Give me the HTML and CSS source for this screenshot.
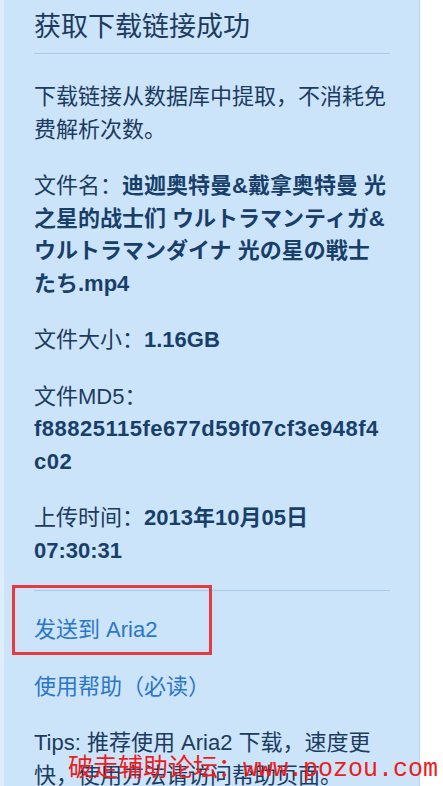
FILE: index.html
```html
<!DOCTYPE html>
<html lang="zh-CN">
<head>
    <meta charset="UTF-8">
    <meta name="viewport" content="width=device-width, initial-scale=1.0">
    <title>获取下载链接成功</title>
    <link rel="stylesheet" href="styles.css">
</head>
<body>
    <div class="panel">
        <h1 class="titulo">获取下载链接成功</h1>

        <p>下载链接从数据库中提取，不消耗免费解析次数。</p>

        <p>文件名：<b>迪迦奥特曼&amp;戴拿奥特曼 光之星的战士们 ウルトラマンティガ&amp;ウルトラマンダイナ 光の星の戦士たち.mp4</b></p>

        <p>文件大小：<b>1.16GB</b></p>

        <p>文件MD5：<br><b class="md5">f88825115fe677d59f07cf3e948f4c02</b></p>

        <p>上传时间：<b>2013年10月05日 07:30:31</b></p>

        <hr class="linea">

        <p class="marcado"><a href="#">发送到 Aria2</a><span class="caja"></span></p>

        <p><a href="#">使用帮助（必读）</a></p>

        <p>Tips: 推荐使用 Aria2 下载，速度更快，使用方法请访问帮助页面。</p>
    </div>

    <div class="marca">破走辅助论坛：www.pozou.com</div>
</body>
</html>
```

FILE: styles.css
```css
body {
    margin: 0;
    background: #fff;
    font-family: "Liberation Sans", "Noto Sans CJK SC", sans-serif;
    color: #1b3b5f;
}

.panel {
    margin-left: 4px;
    width: 356px;
    padding: 9px 29px 40px 30px;
    background: #cce4fa;
    border-right: 1px solid #b4d3ef;
    box-shadow: -4px 0 0 #ddedfb;
}

.titulo {
    margin: 0;
    padding-bottom: 8px;
    border-bottom: 1px solid #a9cbea;
    font-size: 27px;
    line-height: 36px;
    font-weight: normal;
    color: #1d3c5d;
}

.panel p {
    margin: 0;
    margin-top: 24px;
    font-size: 22px;
    line-height: 32.5px;
}

.panel p:first-of-type {
    margin-top: 27px;
}

.panel b {
    color: #173f6a;
}

.md5 {
    word-break: break-all;
    letter-spacing: 0.5px;
}

.linea {
    margin: 23px 0 0;
    border: 0;
    border-top: 1px solid #a9cbea;
}

.panel .marcado {
    margin-top: 23px;
    position: relative;
}

.panel a {
    color: #2b76c6;
    text-decoration: none;
}

/* recuadro rojo de anotacion */
.caja {
    position: absolute;
    left: -22px;
    top: -29px;
    width: 194px;
    height: 64px;
    border: 3px solid #e8393e;
}

.marca {
    position: absolute;
    left: 68px;
    top: 752px;
    font-family: "Liberation Mono", "Noto Sans CJK SC", monospace;
    font-size: 25px;
    line-height: 36px;
    color: #ee1c1c;
    white-space: nowrap;
}
```
